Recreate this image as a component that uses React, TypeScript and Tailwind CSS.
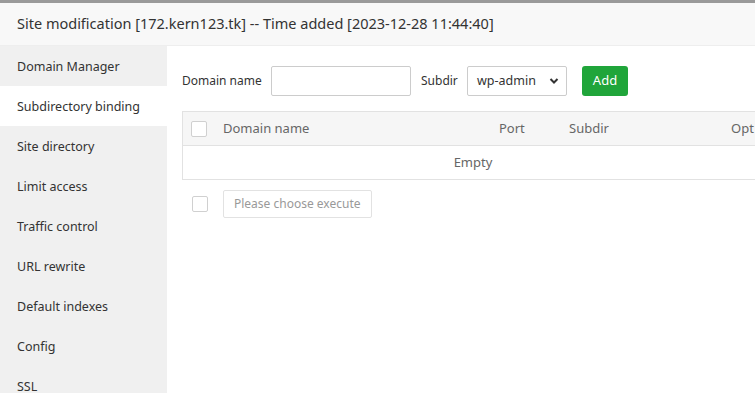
import React from "react";

const navItems = [
  "Domain Manager",
  "Subdirectory binding",
  "Site directory",
  "Limit access",
  "Traffic control",
  "URL rewrite",
  "Default indexes",
  "Config",
  "SSL",
];

const Checkbox = () => (
  <span className="inline-block w-4 h-4 rounded-[2px] border border-[#d0d0d0] bg-white shrink-0" />
);

export default function App() {
  const active = "Subdirectory binding";
  return (
    <div
      className="w-[755px] h-[393px] overflow-hidden bg-white text-[#333] flex flex-col"
      style={{ fontFamily: '"Noto Sans", "Open Sans", sans-serif' }}
    >
      {/* top frame edge */}
      <div className="h-[3px] bg-[#9a9a9a] shrink-0" />

      {/* title bar */}
      <div className="h-[43px] shrink-0 bg-[#f8f8f8] border-b border-[#eeeeee] flex items-center pl-[17px] text-[14.5px] text-[#333]">
        Site modification [172.kern123.tk] -- Time added [2023-12-28 11:44:40]
      </div>

      <div className="flex flex-1 min-h-0">
        {/* sidebar */}
        <div className="w-[167px] shrink-0 bg-[#f0f0f0] flex flex-col">
          {navItems.map((item) => (
            <div
              key={item}
              className={
                "h-10 shrink-0 flex items-center pl-[17px] pt-[2px] text-[12.5px] text-[#333] " +
                (item === active ? "bg-white" : "")
              }
            >
              {item}
            </div>
          ))}
        </div>

        {/* content */}
        <div className="flex-1 min-w-0 pl-[15px] pt-5">
          <div className="flex items-center h-[30px] text-[12px]">
            <span className="w-[89px]">Domain name</span>
            <input
              className="w-[140px] h-[30px] border border-[#ccc] rounded-[2px] outline-none px-2"
              type="text"
            />
            <span className="ml-[10px] w-[46px]">Subdir</span>
            <div className="w-[100px] h-[30px] border border-[#ccc] rounded-[2px] flex items-center justify-between pl-[9px] pr-[7px]">
              <span className="text-[12.5px]">wp-admin</span>
              <svg width="10" height="8" viewBox="0 0 10 8">
                <path d="M1.5 2 L5 5.5 L8.5 2" fill="none" stroke="#333" strokeWidth="2" />
              </svg>
            </div>
            <button className="ml-[15px] w-[46px] h-[30px] rounded-[3px] bg-[#20a53a] text-white text-[13px]">
              Add
            </button>
          </div>

          {/* table */}
          <div className="mt-[15px] w-[600px] border border-[#e2e2e2] text-[13px]">
            <div className="h-[34px] bg-[#f6f6f6] border-b border-[#e2e2e2] flex items-center text-[#666]">
              <div className="w-[40px] pl-[8px] flex items-center">
                <Checkbox />
              </div>
              <div className="w-[276px]">Domain name</div>
              <div className="w-[70px]">Port</div>
              <div className="w-[162px]">Subdir</div>
              <div>Opt</div>
            </div>
            <div className="h-[33px] flex items-center text-[#666]">
              <div className="w-[580px] text-center">Empty</div>
            </div>
          </div>

          <div className="mt-[10px] flex items-center h-[28px]">
            <div className="pl-[10px] w-[41px] flex items-center">
              <Checkbox />
            </div>
            <button className="h-[28px] px-[10px] border border-[#e2e2e2] rounded-[2px] bg-white text-[#999] text-[12px]">
              Please choose execute
            </button>
          </div>
        </div>
      </div>
    </div>
  );
}
